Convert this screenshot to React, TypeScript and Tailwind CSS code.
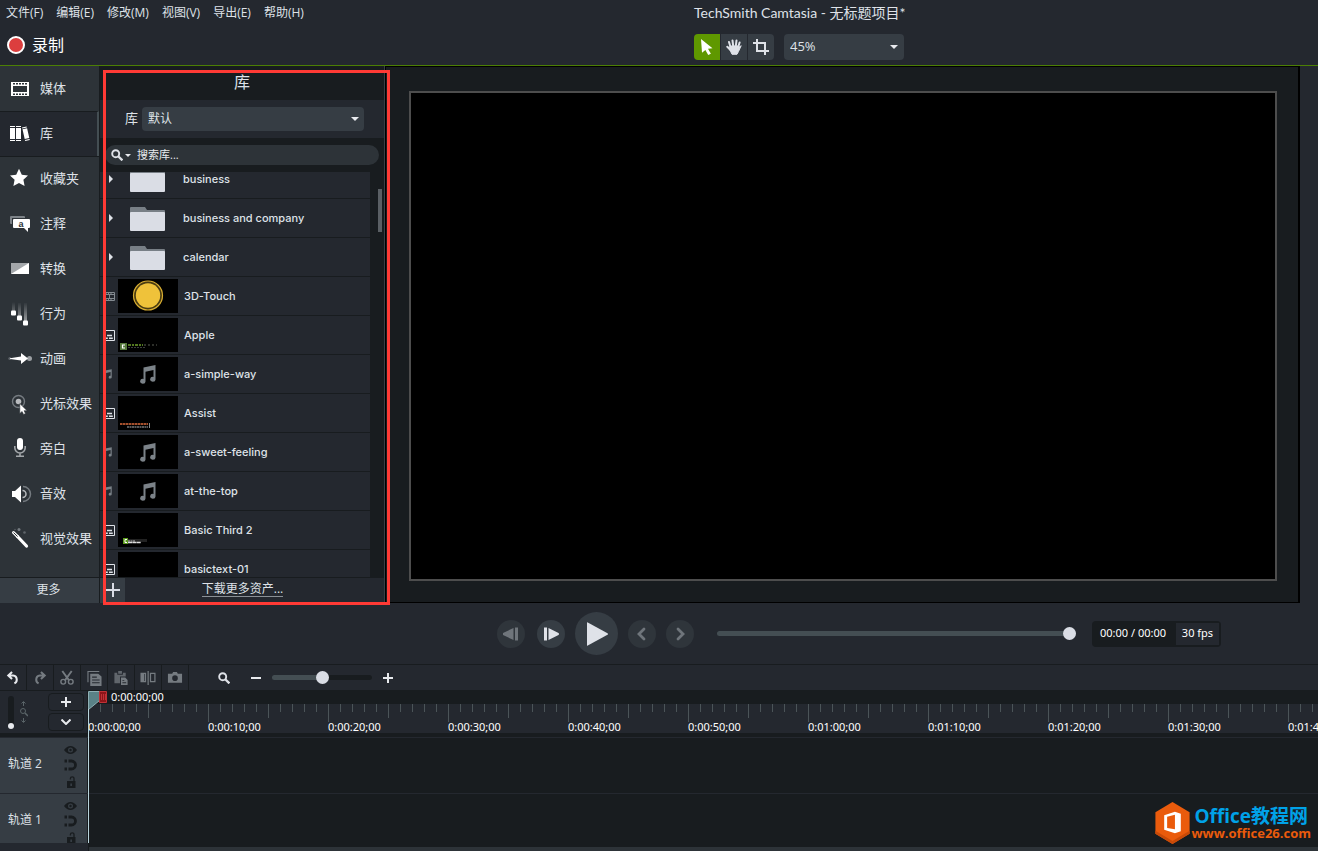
import React, { useLayoutEffect, useRef, useState } from 'react';

type ItemKind = 'folder' | 'video' | 'title' | 'audio';

interface LibraryItem {
  name: string;
  kind: ItemKind;
  thumb?: React.ReactNode;
}

const menus = ['文件(F)', '编辑(E)', '修改(M)', '视图(V)', '导出(E)', '帮助(H)'];

const timeLabels = [
  '0:00:00;00', '0:00:10;00', '0:00:20;00', '0:00:30;00', '0:00:40;00', '0:00:50;00',
  '0:01:00;00', '0:01:10;00', '0:01:20;00', '0:01:30;00', '0:01:40;00',
];

const SideIcon: React.FC<{ children: React.ReactNode }> = ({ children }) => (
  <svg className="-mt-0.5 h-6 w-6 shrink-0 overflow-visible" viewBox="0 0 24 24" fill="#fff" aria-hidden="true">
    {children}
  </svg>
);

const sections = [
  {
    label: '媒体',
    icon: (
      <>
        <path fillRule="evenodd" d="M3 6h18v14H3zM5 10v6h14v-6z" />
        <path fill="#2d3338" d="M5 7h2v1.500H5zM8 7h2v1.500H8zM11 7h2v1.500h-2zM14 7h2v1.500h-2zM17 7h2v1.500h-2zM5 17.500h2V19H5zM8 17.500h2V19H8zM11 17.500h2V19h-2zM14 17.500h2V19h-2zM17 17.500h2V19h-2z" />
      </>
    ),
  },
  {
    label: '库',
    icon: (
      <>
        <path d="M2 5h5v1H2zM2 7h5v11H2zM2 19h5v1H2zM8 5h5v1H8zM8 7h5v11H8zM8 19h5v1H8z" />
        <path d="M14 6.4l4.6-1 .2 1-4.6 1zM14.5 8.3l4.6-1 2.2 9.6-4.6 1.1zM16.9 19l4.6-1 .3 1-4.6 1z" />
      </>
    ),
  },
  {
    label: '收藏夹',
    icon: <path d="M11 2.8l2.8 6 6.2.7-4.6 4.3 1.2 6.2L11 17l-5.6 3 1.2-6.2L2 9.500l6.200-.7z" />,
  },
  {
    label: '注释',
    icon: (
      <>
        <path fill="#7d8388" d="M3 5h13a1 1 0 0 1 1 1v1H4v6H3a1 1 0 0 1-1-1V6a1 1 0 0 1 1-1z" />
        <path d="M6 8h15a1 1 0 0 1 1 1v7a1 1 0 0 1-1 1h-1v4l-4-4H6a1 1 0 0 1-1-1V9a1 1 0 0 1 1-1z" />
        <text x="10.500" y="15.500" fontSize="9" fontWeight="700" fill="#2d3338" fontFamily="Liberation Sans, sans-serif">a</text>
      </>
    ),
  },
  {
    label: '转换',
    icon: (
      <>
        <path fill="#a3a7aa" d="M3 7h18v11H3z" />
        <path d="M21 7v11H3z" />
      </>
    ),
  },
  {
    label: '行为',
    icon: (
      <>
        <defs>
          <linearGradient id="trail" x1="0" y1="0" x2="0" y2="1">
            <stop offset="0" stopColor="#fff" stopOpacity="0" />
            <stop offset="1" stopColor="#fff" stopOpacity="0.5" />
          </linearGradient>
        </defs>
        <path fill="url(#trail)" d="M4 1h3v9H4zM10 2h3v13h-3zM16 2h3v18h-3z" />
        <rect x="3" y="9.500" width="5" height="5" rx="1" />
        <rect x="9" y="14.500" width="5" height="5" rx="1" />
        <rect x="15" y="19.500" width="5" height="5" rx="1" />
      </>
    ),
  },
  {
    label: '动画',
    icon: (
      <>
        <circle cx="1.800" cy="12.500" r="1.500" fill="#5f656a" />
        <circle cx="21.500" cy="12.500" r="2.500" fill="#9ca0a4" />
        <path d="M2 12.300l11-1.800V7l7 5.500-7 5.500v-3.500L2 12.900z" />
      </>
    ),
  },
  {
    label: '光标效果',
    icon: (
      <>
        <circle cx="10.500" cy="10.500" r="6" fill="none" stroke="#757b80" strokeWidth="1.400" />
        <circle cx="10.500" cy="10.500" r="2.800" fill="#b8bbbe" />
        <path stroke="#2d3338" strokeWidth="0.600" d="M11.800 12.500v10l2.300-2 1.500 3 1.900-.9-1.400-2.900h3z" />
      </>
    ),
  },
  {
    label: '旁白',
    icon: (
      <>
        <rect x="9" y="2" width="6" height="12" rx="3" />
        <path fill="none" stroke="#a3a7aa" strokeWidth="1.600" d="M6.800 10v1.800a5.200 5.200 0 0 0 10.400 0V10M12 17v3M8 20.200h8" />
      </>
    ),
  },
  {
    label: '音效',
    icon: (
      <>
        <path d="M4 10h3l6-5.500v17L7 16H4z" />
        <path fill="none" stroke="#b8bbbe" strokeWidth="1.500" d="M14.500 9.500a3.500 3.500 0 0 1 0 7" />
        <path fill="none" stroke="#757b80" strokeWidth="1.500" d="M15 5.500a7.500 7.500 0 0 1 0 15" />
      </>
    ),
  },
  {
    label: '视觉效果',
    icon: (
      <>
        <path fill="none" stroke="#fff" strokeWidth="3.200" strokeLinecap="round" d="M9.500 10.500l9 9.500" />
        <path fill="none" stroke="#fff" strokeWidth="3" strokeLinecap="round" d="M5.500 6.500l4 4" />
        <path fill="none" stroke="#2d3338" strokeWidth="1" strokeLinecap="round" d="M5.800 6.800l3.500 3.500" />
        <circle cx="11" cy="3.500" r="1.500" fill="#757b80" />
        <circle cx="16.500" cy="6.500" r="1.300" fill="#5f656a" />
        <circle cx="7" cy="3.500" r="0.700" fill="#5f656a" />
      </>
    ),
  },
];

const NoteGlyph: React.FC<{ className: string }> = ({ className }) => (
  <svg className={className} viewBox="0 0 16 19" fill="#7b8288" aria-hidden="true">
    <path d="M3.500 2.500L15.500 0v14.200a2.700 2.500 0 1 1-2-2.300V5L5.500 6.700v9.500a2.700 2.500 0 1 1-2-2.300z" />
  </svg>
);

const items: LibraryItem[] = [
  { name: 'business', kind: 'folder' },
  { name: 'business and company', kind: 'folder' },
  { name: 'calendar', kind: 'folder' },
  {
    name: '3D-Touch',
    kind: 'video',
    thumb: (
      <svg className="h-full w-full" viewBox="0 0 60 34" aria-hidden="true">
        <circle cx="30" cy="16.500" r="14.500" fill="#4a3c12" stroke="#d9ae31" strokeWidth="1.200" />
        <circle cx="30" cy="16.500" r="12.200" fill="#efc23a" />
      </svg>
    ),
  },
  {
    name: 'Apple',
    kind: 'title',
    thumb: (
      <svg className="h-full w-full" viewBox="0 0 60 34" aria-hidden="true">
        <path fill="#55783a" d="M2 25h7v7H2z" />
        <path fill="none" stroke="#fff" strokeWidth="1.200" d="M7 27H4.500v3H7" />
        <path stroke="#6fa02a" strokeWidth="1.500" strokeDasharray="3 1 2 1" d="M10 27h15" />
        <path stroke="#5a5f55" strokeDasharray="2 2" d="M26 27h13" />
        <path stroke="#3c3f3c" strokeDasharray="2 1" d="M10 29.500h17" />
      </svg>
    ),
  },
  { name: 'a-simple-way', kind: 'audio' },
  {
    name: 'Assist',
    kind: 'title',
    thumb: (
      <svg className="h-full w-full" viewBox="0 0 60 34" aria-hidden="true">
        <path stroke="#a5502c" strokeWidth="2" strokeDasharray="2 .5 3 .5" d="M2 28h28" />
        <path stroke="#777" strokeWidth="1.500" strokeDasharray="2 .5" d="M9 31h21" />
        <path stroke="#8a8a8a" d="M31.500 27v5" />
      </svg>
    ),
  },
  { name: 'a-sweet-feeling', kind: 'audio' },
  { name: 'at-the-top', kind: 'audio' },
  {
    name: 'Basic Third 2',
    kind: 'title',
    thumb: (
      <svg className="h-full w-full" viewBox="0 0 60 34" aria-hidden="true">
        <path fill="#222" d="M10 26h19v3H10z" />
        <path fill="#5c9a1e" d="M5 25h5v6H5z" />
        <path fill="none" stroke="#fff" d="M9 26.500H7v3h2" />
        <path stroke="#bbb" strokeDasharray="2 .5" d="M10 28h7" />
        <path stroke="#ddd" strokeWidth="1.500" strokeDasharray="4 .3" d="M10 29.500h13" />
      </svg>
    ),
  },
  { name: 'basictext-01', kind: 'title' },
];

const KindIcon: React.FC<{ kind: ItemKind }> = ({ kind }) => {
  if (kind === 'audio') return <NoteGlyph className="mr-[3px] h-[11px] w-[9px]" />;
  if (kind === 'video') {
    return (
      <svg className="h-[11px] w-3" viewBox="0 0 12 11" fill="none" stroke="#838a90" aria-hidden="true">
        <path d="M.5 1.500h11v8H.5zM1 3.500h10M1 7.500h10M6.500 3v5M3 1v2M5.500 1v2M8 1v2M3 8v2M5.500 8v2M8 8v2" />
      </svg>
    );
  }
  return (
    <svg className="h-[11px] w-3" viewBox="0 0 12 11" fill="none" stroke="#dfe2e8" aria-hidden="true">
      <path d="M.5.5h11v10H.5z" />
      <path strokeWidth="1.600" d="M4 5.500h5M1.500 8.200h3.300M6 8.200h3.800" />
    </svg>
  );
};

const LibraryRow: React.FC<{ item: LibraryItem }> = ({ item }) => (
  <li className="flex h-[39px] items-center border-b border-[#181c1f] bg-[#24282f]">
    {item.kind === 'folder' ? (
      <>
        <button aria-label={`展开 ${item.name}`} className="flex h-full w-[30px] items-center pl-[9px]">
          <svg className="h-2 w-1" viewBox="0 0 4 8" fill="#dfe2e8"><path d="M0 0l4 4-4 4z" /></svg>
        </button>
        <svg className="mt-0.5 h-6 w-[35px]" viewBox="0 0 35 24" aria-hidden="true">
          <path fill="#787f86" d="M0 1a1 1 0 0 1 1-1h14l2 3h17a1 1 0 0 1 1 1v19H0z" />
          <path fill="#dadde5" d="M0 6a1 1 0 0 1 1-1h33a1 1 0 0 1 1 1v17a1 1 0 0 1-1 1H1a1 1 0 0 1-1-1z" />
        </svg>
        <span className="pl-[18px]">{item.name}</span>
      </>
    ) : (
      <>
        <span className="flex w-[18px] justify-end pr-[3px]"><KindIcon kind={item.kind} /></span>
        <span className="flex h-[34px] w-[60px] items-center justify-center bg-black">
          {item.kind === 'audio' ? <NoteGlyph className="h-[19px] w-4" /> : item.thumb}
        </span>
        <span className="pl-[6px]">{item.name}</span>
      </>
    )}
  </li>
);

const Caret: React.FC<{ className: string }> = ({ className }) => (
  <svg className={className} viewBox="0 0 8 4" fill="#e8eaee" aria-hidden="true"><path d="M0 0h8L4 4z" /></svg>
);

const MagnifierIcon: React.FC<{ className: string }> = ({ className }) => (
  <svg className={className} viewBox="0 0 12 12" fill="none" stroke="currentColor" aria-hidden="true">
    <circle cx="4.700" cy="4.700" r="3.500" strokeWidth="1.900" />
    <path strokeWidth="2.300" d="M7.200 7.200l4.200 4.200" />
  </svg>
);

const Header: React.FC = () => (
  <header className="flex h-[66px] shrink-0 border-b border-[#4c7f04]">
    <div className="flex min-w-0 flex-1 flex-col">
      <nav className="flex h-[26px] items-center gap-[13px] pl-[6px] text-[12px]">
        {menus.map((menu) => (
          <button key={menu} className="whitespace-nowrap">{menu}</button>
        ))}
      </nav>
      <button className="flex h-10 items-center gap-[7px] self-start pl-[7px] text-[16px] text-white">
        <span className="h-[18px] w-[18px] rounded-full border-2 border-white bg-[#dc3e3e]" />
        录制
      </button>
    </div>
    <div className="w-[624px] shrink-0">
      <h1 className="flex h-[25px] items-center font-[Lato,'Noto_Sans_CJK_SC',sans-serif] text-[14px]">TechSmith Camtasia - 无标题项目*</h1>
      <div className="flex pt-[9px]">
        <div className="flex gap-px overflow-hidden rounded-sm">
          <button aria-label="选择" className="flex h-[26px] w-[26px] items-center justify-center bg-[#5f9800]">
            <svg className="h-4 w-3" viewBox="0 0 12 16" fill="#fff"><path d="M0 0l11.500 9.300-4.500.5 2.900 5-2.700 1.200-2.800-5.100L1 13.800z" /></svg>
          </button>
          <button aria-label="平移" className="flex h-[26px] w-[26px] items-center justify-center bg-[#363d44]">
            <svg className="h-4 w-4" viewBox="0 0 16 16" fill="none" stroke="#dfe2e8" strokeLinecap="round">
              <path strokeWidth="2" d="M4.500 8L3 3M7.200 7L6.500 1.500M9.800 7l.7-5.500M12.200 8l1.400-4.500M4.500 11L1.300 7.800" />
              <path fill="#dfe2e8" strokeWidth="1" strokeLinejoin="round" d="M4.500 7h8.200l.8 1 1.700-1.300-2.700 5.800-1.500 2.800H6L3.500 10z" />
            </svg>
          </button>
          <button aria-label="裁剪" className="flex h-[26px] w-[26px] items-center justify-center bg-[#363d44]">
            <svg className="h-4 w-4" viewBox="0 0 16 16" fill="none" stroke="#dfe2e8" strokeWidth="2">
              <path d="M4 0v12h12M0 4h12v12" />
            </svg>
          </button>
        </div>
        <div className="relative ml-[10px] w-[120px]">
          <select aria-label="缩放" className="block h-[26px] w-full appearance-none rounded-sm bg-[#363d44] pl-[6px] text-[13px] outline-none">
            <option>45%</option>
          </select>
          <Caret className="pointer-events-none absolute top-[11px] right-[6px] h-1 w-2" />
        </div>
      </div>
    </div>
  </header>
);

const Sidebar: React.FC<{ active: string; onSelect: (label: string) => void }> = ({ active, onSelect }) => {
  const activeIndex = sections.findIndex((section) => section.label === active);

  return (
    <nav className="flex w-[100px] shrink-0 flex-col border-r border-[#181c1f] bg-[#2d3338]">
      {sections.map(({ label, icon }, i) => (
        <button
          key={label}
          onClick={() => onSelect(label)}
          className={`flex h-[45px] shrink-0 items-center gap-2 border-t pl-2 text-[13px] whitespace-nowrap ${
            i === activeIndex
              ? 'border-r-2 border-t-[#181c1f] border-r-[#444e53] bg-[#24282f]'
              : i === activeIndex + 1
                ? 'border-[#181c1f]'
                : 'border-transparent'
          }`}
        >
          <SideIcon>{icon}</SideIcon>
          {label}
        </button>
      ))}
      <button className="mt-auto h-[26px] border-t border-[#181c1f] bg-[#363d44] pr-0.5 pb-0.5 text-[12px]">更多</button>
    </nav>
  );
};

const LibraryPanel: React.FC = () => {
  const listRef = useRef<HTMLUListElement>(null);

  useLayoutEffect(() => {
    if (listRef.current) listRef.current.scrollTop = 12;
  }, []);

  return (
    <section className="relative flex w-[285px] shrink-0 flex-col border-r border-[#3a4046] bg-[#181c1f]">
      <h2 className="flex h-[34px] items-center justify-center pb-0.5 text-[16px]">库</h2>
      <div className="flex h-[38px] items-center gap-1 bg-[#24282f] pl-[25px] text-[13px]">
        <label htmlFor="library">库</label>
        <div className="relative w-[222px]">
          <select id="library" className="block h-6 w-full appearance-none rounded-sm bg-[#363d44] pl-[6px] text-[12px] outline-none">
            <option>默认</option>
          </select>
          <Caret className="pointer-events-none absolute top-[10px] right-[5px] h-1 w-2" />
        </div>
      </div>
      <div className="flex h-[34px] items-center pr-[5px] pl-[5px]">
        <div className="flex h-5 w-full items-center rounded-full bg-[#2d3338] pl-[6px]">
          <MagnifierIcon className="h-3 w-3" />
          <Caret className="ml-[2px] h-[3px] w-[6px]" />
          <input aria-label="搜索库" placeholder="搜索库..." className="ml-[6px] min-w-0 flex-1 bg-transparent text-[11px] outline-none placeholder:text-[#e8eaee]" />
        </div>
      </div>
      <div className="flex min-h-0 flex-1">
        <ul ref={listRef} className="w-[270px] overflow-y-auto font-[Inter,sans-serif] text-[11px] font-medium [scrollbar-width:none]">
          {items.map((item) => (
            <LibraryRow key={item.name} item={item} />
          ))}
        </ul>
        <div className="mt-[17px] ml-2 h-[43px] w-1 bg-[#5a5f64]" />
      </div>
      <div className="flex h-[26px] border-t border-[#181c1f] bg-[#24282f]">
        <button aria-label="添加" className="flex w-[25px] items-center justify-center bg-[#363d44] pb-0.5">
          <svg className="h-[14px] w-[14px]" viewBox="0 0 14 14" stroke="#dadde5" strokeWidth="2"><path d="M7 0v14M0 7h14" /></svg>
        </button>
        <div className="flex flex-1 items-center justify-center pr-6 pb-0.5">
          <a href="#assets" className="border-b border-[#8a9096] text-[12px] leading-[14px]">下载更多资产...</a>
        </div>
      </div>
      <div className="pointer-events-none absolute top-1 -right-[6px] -bottom-[2px] left-[3px] z-10 border-3 border-[#ff3a35]" />
    </section>
  );
};

const RoundButton: React.FC<{ label: string; muted?: boolean; children: React.ReactNode }> = ({ label, muted, children }) => (
  <button
    aria-label={label}
    className={`flex h-7 w-7 items-center justify-center rounded-full ${muted ? 'bg-[#2f353b] text-[#6f757b]' : 'bg-[#363d44] text-[#dfe2e8]'}`}
  >
    {children}
  </button>
);

const PlayerControls: React.FC = () => (
  <div className="flex h-[62px] shrink-0 items-center justify-end border-b border-[#181c1f] pr-[97px]">
    <div className="flex items-center">
      <RoundButton label="上一帧" muted>
        <svg className="h-[14px] w-4" viewBox="0 0 16 14" fill="currentColor"><path d="M10.500 1v12L0 8q-1-1 0-2zM12 .5h3v13h-3z" /></svg>
      </RoundButton>
      <span className="w-3" />
      <RoundButton label="下一帧">
        <svg className="h-[14px] w-4" viewBox="0 0 16 14" fill="currentColor"><path d="M5.500 1v12L15.500 8q1-1 0-2zM1 .5h3v13H1z" /></svg>
      </RoundButton>
      <button aria-label="播放" className="mx-[10px] flex h-[43px] w-[43px] items-center justify-center rounded-full bg-[#363d44] pl-[2px]">
        <svg className="h-6 w-[21px]" viewBox="0 0 21 24" fill="#dfe2e8"><path d="M0 .8Q0 0 .8.400L20.500 11.200q1 .8 0 1.600L.8 23.600Q0 24 0 23.200z" /></svg>
      </button>
      <RoundButton label="上一个" muted>
        <svg className="h-[14px] w-[10px]" viewBox="0 0 10 14" fill="none" stroke="currentColor" strokeWidth="2.800" strokeLinecap="round"><path d="M7 2L2 7l5 5" /></svg>
      </RoundButton>
      <span className="w-[10px]" />
      <RoundButton label="下一个" muted>
        <svg className="h-[14px] w-[10px]" viewBox="0 0 10 14" fill="none" stroke="currentColor" strokeWidth="2.800" strokeLinecap="round"><path d="M3 2l5 5-5 5" /></svg>
      </RoundButton>
    </div>
    <input
      type="range"
      aria-label="播放位置"
      defaultValue={100}
      className="ml-[23px] h-[5px] w-[359px] appearance-none rounded-full bg-[#444e53] [&::-webkit-slider-thumb]:h-[13px] [&::-webkit-slider-thumb]:w-[13px] [&::-webkit-slider-thumb]:appearance-none [&::-webkit-slider-thumb]:rounded-full [&::-webkit-slider-thumb]:bg-[#dadde5]"
    />
    <div className="ml-4 flex h-[26px] w-[129px] items-center justify-between rounded-sm bg-[#181c1f] pr-[2px] pl-2 font-['Noto_Sans',sans-serif] text-[11px] whitespace-nowrap text-white">
      <span>00:00 / 00:00</span>
      <span className="flex h-[22px] w-[43px] items-center justify-center bg-[#24282f]">30 fps</span>
    </div>
  </div>
);

const editTools = [
  {
    label: '撤销',
    muted: false,
    icon: <path fill="none" stroke="currentColor" strokeWidth="2.200" d="M7 2L3 5.800 7 9.600M3.500 5.800H8a4.500 4.500 0 0 1 4 4.500c0 2-1 3.200-2.500 3.900" />,
  },
  {
    label: '重做',
    muted: true,
    icon: <path fill="none" stroke="currentColor" strokeWidth="2.200" d="M9 2l4 3.800-4 3.800M12.500 5.800H8a4.500 4.500 0 0 0-4 4.500c0 2 1 3.200 2.500 3.900" />,
  },
  {
    label: '剪切',
    muted: true,
    icon: (
      <g fill="none" stroke="currentColor" strokeWidth="1.500">
        <circle cx="4" cy="12.500" r="2.500" />
        <circle cx="12" cy="12.500" r="2.500" />
        <path strokeWidth="2" d="M3 1l7.200 10M13 1L5.800 11" />
      </g>
    ),
  },
  {
    label: '复制',
    muted: true,
    icon: (
      <>
        <path fill="none" stroke="currentColor" strokeWidth="1.200" d="M1.600 13V1.600h12" />
        <path fillRule="evenodd" d="M4 4h8.500L16 7v10H4zM6 7v1.200h5V7zM6 10v1.200h8V10zM6 13v1.200h8V13z" />
      </>
    ),
  },
  {
    label: '粘贴',
    muted: true,
    icon: (
      <>
        <path opacity="0.750" d="M1 3h3v2h6V3h3v4H7v7H1zM5 1h4v3H5z" />
        <path fillRule="evenodd" d="M8 8h4.500L15 10.500V16H8zM9.500 10.500v1h2v-1zM9.500 13v1h4v-1z" />
      </>
    ),
  },
  {
    label: '拆分',
    muted: true,
    icon: (
      <>
        <path d="M7.500 1h1.300v15H7.500z" />
        <path fillRule="evenodd" d="M0 3h6v10H0zM4.500 4.300H3.800v7.400h.7zM10 3h6v10h-6zM11.300 4.300v7.400h3.400V4.300z" />
      </>
    ),
  },
  {
    label: '截图',
    muted: true,
    icon: (
      <path fillRule="evenodd" d="M.5 4H5l1-2h4l1 2h4.500v9.500H.5zM8 5.700a3 3 0 1 0 0 6 3 3 0 0 0 0-6z" />
    ),
  },
];

const EditToolbar: React.FC = () => (
  <div className="flex h-[26px] shrink-0 items-center border-b border-[#181c1f]">
    {editTools.map(({ label, icon, muted }) => (
      <button
        key={label}
        aria-label={label}
        className={`flex h-full w-[27px] shrink-0 items-center justify-center border-r border-[#181c1f] pr-px ${muted ? 'text-[#757b81]' : 'text-[#e8eaee]'}`}
      >
        <svg className="h-4 w-4" viewBox="0 0 16 17" fill="currentColor">{icon}</svg>
      </button>
    ))}
    <MagnifierIcon className="ml-[29px] h-3 w-3" />
    <button aria-label="缩小" className="ml-[21px]">
      <svg className="h-[10px] w-[10px]" viewBox="0 0 10 10" stroke="#e8eaee" strokeWidth="2"><path d="M0 5h10" /></svg>
    </button>
    <input
      type="range"
      aria-label="时间轴缩放"
      defaultValue={50}
      className="mx-[11px] h-[5px] w-[100px] appearance-none rounded-full bg-[linear-gradient(to_right,#444e53_50%,#181c1f_50%)] [&::-webkit-slider-thumb]:h-[13px] [&::-webkit-slider-thumb]:w-[13px] [&::-webkit-slider-thumb]:appearance-none [&::-webkit-slider-thumb]:rounded-full [&::-webkit-slider-thumb]:bg-[#dadde5]"
    />
    <button aria-label="放大">
      <svg className="h-[10px] w-[10px]" viewBox="0 0 10 10" stroke="#e8eaee" strokeWidth="2"><path d="M0 5h10M5 0v10" /></svg>
    </button>
  </div>
);

const TrackHeader: React.FC<{ name: string }> = ({ name }) => (
  <div className="flex h-full w-[88px] shrink-0 items-start justify-between border-r border-[#181c1f] bg-[#363d44] pr-[10px] pl-2">
    <span className="pt-[18px] text-[12px] leading-4 whitespace-nowrap">{name}</span>
    <div className="flex flex-col items-center gap-[5px] pt-2 text-[#181c1f]">
      <button aria-label={`${name} 可见性`}>
        <svg className="h-2 w-[13px]" viewBox="0 0 13 8" fill="currentColor"><path fillRule="evenodd" d="M0 4q3-4 6.500-4T13 4q-3 4-6.500 4T0 4zM6.500 1.500a2.500 2.500 0 1 0 0 5 2.500 2.500 0 0 0 0-5z" /><circle cx="6.500" cy="4" r="1.200" /></svg>
      </button>
      <button aria-label={`${name} 磁性`}>
        <svg className="h-3 w-[13px]" viewBox="0 0 13 12" fill="none" stroke="currentColor" strokeWidth="2.800"><path d="M4.500 2H7.500a4 4 0 0 1 0 8H4.500M.5 2h2.500M.5 10h2.500" /></svg>
      </button>
      <button aria-label={`${name} 锁定`}>
        <svg className="h-3 w-[10px]" viewBox="0 0 10 12" fill="currentColor"><path fillRule="evenodd" d="M1 5h8.500v7H1zM4.300 7.500v2.500h1.700V7.500z" /><path fill="none" stroke="currentColor" strokeWidth="1.300" d="M8 5V2.600a1.800 1.800 0 0 0-3.600 0V3.500" /></svg>
      </button>
    </div>
  </div>
);

const Timeline: React.FC = () => (
  <div className="relative shrink-0 bg-[#181c1f]">
    <div className="flex h-[42px]">
      <div className="flex w-[88px] shrink-0 items-center border-r border-[#181c1f] bg-[#24282f] pl-2">
        <input
          type="range"
          aria-label="轨道高度"
          defaultValue={0}
          className="h-[33px] w-[6px] appearance-none rounded-full bg-[#181c1f] [direction:rtl] [writing-mode:vertical-lr] [&::-webkit-slider-thumb]:h-[6px] [&::-webkit-slider-thumb]:w-[6px] [&::-webkit-slider-thumb]:appearance-none [&::-webkit-slider-thumb]:rounded-full [&::-webkit-slider-thumb]:bg-[#e8eaee]"
        />
        <svg className="ml-[6px] h-6 w-2" viewBox="0 0 8 24" fill="none" stroke="#5a6468" aria-hidden="true">
          <path d="M3.500 6V2M1.500 3.500l2-2 2 2M3.500 18v4M1.500 20.500l2 2 2-2" />
          <circle cx="3" cy="11" r="2.500" />
          <path strokeWidth="1.500" d="M5 13l3 3" />
        </svg>
        <div className="ml-5 flex flex-col gap-[2px]">
          <button aria-label="添加轨道" className="flex h-[18px] w-[36px] items-center justify-center rounded-sm border border-[#181c1f]">
            <svg className="h-[10px] w-[10px]" viewBox="0 0 10 10" stroke="#e8eaee" strokeWidth="2"><path d="M0 5h10M5 0v10" /></svg>
          </button>
          <button aria-label="折叠轨道" className="flex h-[18px] w-[36px] items-center justify-center rounded-sm border border-[#181c1f]">
            <svg className="h-[6px] w-[10px]" viewBox="0 0 10 6" fill="none" stroke="#e8eaee" strokeWidth="2"><path d="M.5.5L5 5 9.500.5" /></svg>
          </button>
        </div>
      </div>
      <div className="min-w-0 flex-1 overflow-hidden font-['Noto_Sans',sans-serif] text-[11px] text-white">
        <div className="h-[13px] pl-[23px] leading-[11px]">0:00:00;00</div>
        <div className="flex h-[29px] bg-[#24282f]">
          {timeLabels.map((label) => (
            <div key={label} className="w-[120px] shrink-0">
              <div className="flex h-4">
                {Array.from({ length: 10 }, (_, i) => (
                  <span
                    key={i}
                    className={`w-3 border-l border-[#4b5458] ${i === 0 ? 'h-[18px]' : i === 5 ? 'h-[14px]' : 'h-2'}`}
                  />
                ))}
              </div>
              <div className="leading-[13px]">{label}</div>
            </div>
          ))}
        </div>
      </div>
    </div>
    <div className="mt-1 flex h-[56px] border-t border-[#24282f]">
      <TrackHeader name="轨道 2" />
    </div>
    <div className="flex h-[50px] overflow-hidden border-t border-[#24282f]">
      <TrackHeader name="轨道 1" />
    </div>
    <div className="flex h-2">
      <div className="w-[88px] bg-[#24282f]" />
      <div className="mt-1 ml-px flex-1 bg-[#2d3338]" />
    </div>

    {/* playhead */}
    <svg className="pointer-events-none absolute top-0 left-[88px] h-[152px] w-5" viewBox="0 0 20 152" aria-hidden="true">
      <path fill="#5a8287" stroke="#8fb0b5" d="M.5 .5h11v9L.5 18.500z" />
      <path fill="#8e1519" stroke="#c03136" d="M11.500 .5h7v11h-7z" />
      <path stroke="#c03136" d="M13.500 3v6M15.500 3v6M17.500 3v6" />
      <path stroke="#b9d4dc" d="M.5 18v134" />
    </svg>
  </div>
);

const Watermark: React.FC = () => (
  <div className="pointer-events-none absolute right-[7px] bottom-[7px] flex items-center gap-px font-['Open_Sans','Noto_Sans_CJK_SC',sans-serif]">
    <svg className="h-[42px] w-[35px]" viewBox="0 0 35 43" aria-hidden="true">
      <path fill="#ea5b0c" d="M17.500 0L35 10.500v22L17.500 43 0 32.500v-22z" />
      <path fill="#c94a08" d="M0 32.500L17.500 43 35 32.500v-3L17.500 40 0 29.500z" />
      <path fill="#fff" fillRule="evenodd" d="M9 13.500L20 10l6 2v18l-6 2-11-3.500zM12 15v11.500l8 1.500V13z" />
    </svg>
    <div className="flex flex-col">
      <span className="pl-[3px] text-[19px] leading-5 font-bold text-[#00a2e8]">Office教程网</span>
      <span className="text-[13px] leading-[14px] font-bold text-[#ea5b0c]">www.office26.com</span>
    </div>
  </div>
);

const App: React.FC = () => {
  const [active, setActive] = useState('库');

  return (
    <div className="relative flex h-screen flex-col overflow-hidden bg-[#24282f] font-['Open_Sans','Noto_Sans_CJK_SC',sans-serif] text-[#dfe2e8]">
      <Header />
      <main className="flex min-h-0 flex-1">
        <Sidebar active={active} onSelect={setActive} />
        <LibraryPanel />
        <div className="mr-[18px] flex min-w-0 flex-1 border border-r-2 border-black bg-[#181c1f] pt-6 pr-[21px] pb-[21px] pl-[23px]">
          <div className="flex-1 border-2 border-[#4d4d4d] bg-black" />
        </div>
      </main>
      <PlayerControls />
      <EditToolbar />
      <Timeline />
      <Watermark />
    </div>
  );
};

export default App;
